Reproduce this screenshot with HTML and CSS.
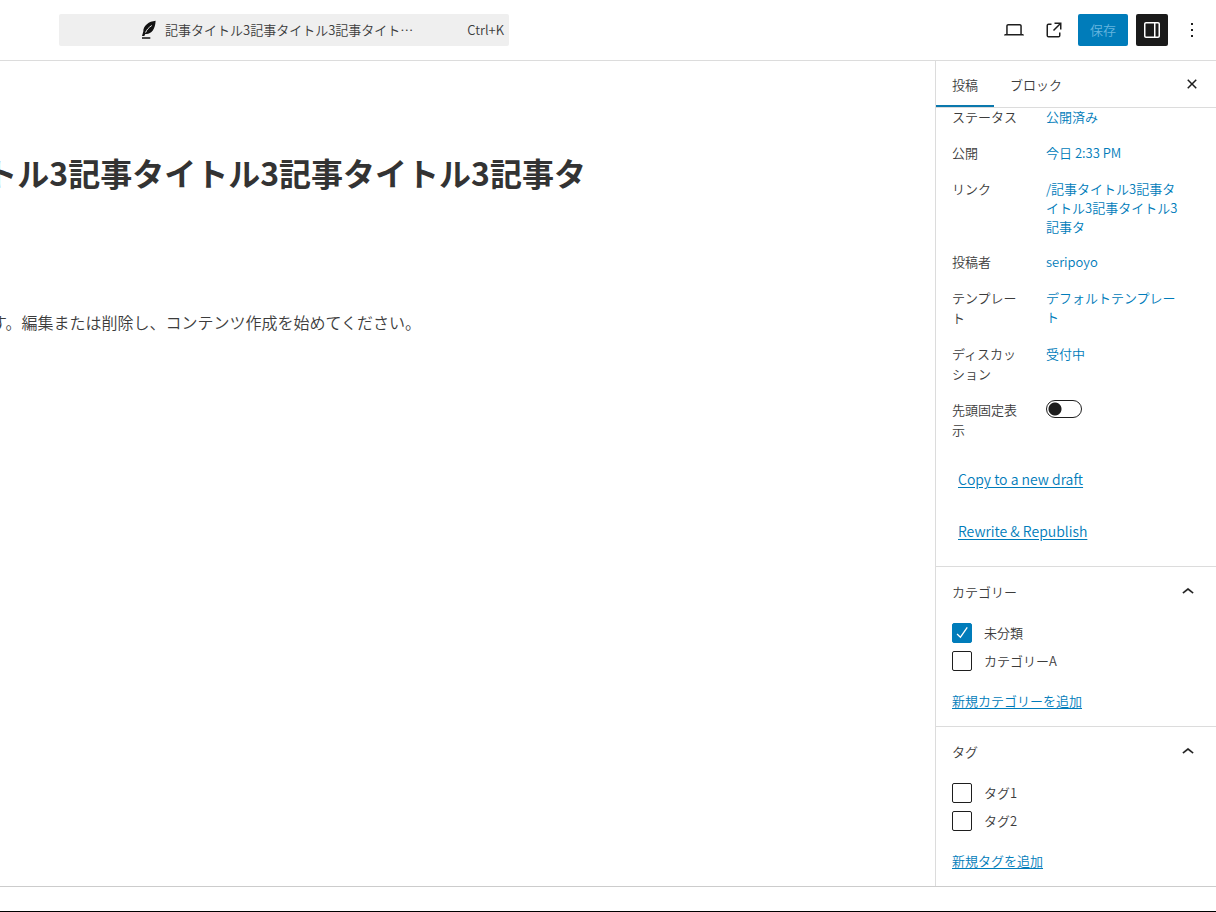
FILE: index.html
```html
<!DOCTYPE html>
<html lang="ja">
<head>
<meta charset="utf-8">
<meta name="viewport" content="width=device-width, initial-scale=1">
<title>投稿を編集</title>
<link rel="stylesheet" href="styles.css">
</head>
<body>
<header class="topbar">
  <button class="command" type="button">
    <span class="command-title">
      <svg class="feather" viewBox="0 0 16 20" aria-hidden="true"><path d="M14.600 .8C8 1.400 2 5.600 2.300 11.600L1 16H3.300L4.300 13.900C10 14.600 14.300 9.800 14.600 .8Z" fill="#111"/><path d="M4.600 12.600C5.600 9.800 7.600 7.600 10.800 5.500" fill="none" stroke="#efefef"/><path d="M1 18H9.300" stroke="#111" stroke-width="1.500"/></svg>
      <span>記事タイトル3記事タイトル3記事タイト…</span>
    </span>
    <kbd>Ctrl+K</kbd>
  </button>
  <div class="actions">
    <button class="icon-button" type="button" aria-label="表示"><svg viewBox="0 0 24 24"><path d="M20.5 16h-.7V8c0-1.100-.9-2-2-2H6.200c-1.100 0-2 .9-2 2v8h-.7c-.8 0-1.500.7-1.500 1.500h20c0-.8-.7-1.500-1.500-1.500zM5.700 8c0-.3.2-.5.5-.5h11.600c.3 0 .5.2.5.5v8H5.700V8z"/></svg></button>
    <button class="icon-button" type="button" aria-label="投稿を表示"><svg viewBox="0 0 24 24"><path d="M19.500 4.500h-7V6h4.440l-5.970 5.970 1.060 1.060L18 7.060v4.440h1.500v-7Zm-13 1a2 2 0 0 0-2 2v10a2 2 0 0 0 2 2h10a2 2 0 0 0 2-2v-3H17v3a.5.5 0 0 1-.5.5h-10a.5.5 0 0 1-.5-.5v-10a.5.5 0 0 1 .5-.5h3V5.500h-3Z"/></svg></button>
    <button class="save" type="button" disabled>保存</button>
    <button class="icon-button pressed" type="button" aria-label="設定" aria-pressed="true"><svg viewBox="0 0 24 24"><path d="M18 4H6c-1.100 0-2 .9-2 2v12c0 1.100.9 2 2 2h12c1.100 0 2-.9 2-2V6c0-1.100-.9-2-2-2zm-4 14.500H6c-.3 0-.5-.2-.5-.5V6c0-.3.2-.5.5-.5h8v13zm4.500-.5c0 .3-.2.5-.5.5h-2.500v-13H18c.3 0 .5.2.5.5v12z"/></svg></button>
    <button class="icon-button" type="button" aria-label="オプション"><svg viewBox="0 0 24 24"><path d="M13 19h-2v-2h2v2zm0-6h-2v-2h2v2zm0-6h-2V5h2v2z"/></svg></button>
  </div>
</header>

<div class="workspace">
  <main class="canvas">
    <h1>記事タイトル3記事タイトル3記事タイトル3記事タ</h1>
    <p>WordPress へようこそ。こちらは最初の投稿です。編集または削除し、コンテンツ作成を始めてください。</p>
  </main>

  <aside class="sidebar">
    <div class="tabs" role="tablist">
      <button class="tab active" type="button" role="tab" aria-selected="true">投稿</button>
      <button class="tab" type="button" role="tab" aria-selected="false">ブロック</button>
      <button class="icon-button close" type="button" aria-label="閉じる"><svg viewBox="0 0 24 24"><path d="M12 13.060l3.712 3.713 1.061-1.060L13.061 12l3.712-3.712-1.060-1.060L12 10.938 8.288 7.227l-1.061 1.060L10.939 12l-3.712 3.712 1.060 1.061L12 13.061z"/></svg></button>
    </div>
    <div class="panels">
      <section class="summary">
        <div class="row"><span class="label">ステータス</span><button type="button" class="value">公開済み</button></div>
        <div class="row"><span class="label">公開</span><button type="button" class="value">今日 2:33 PM</button></div>
        <div class="row"><span class="label">リンク</span><button type="button" class="value">/記事タイトル3記事タイトル3記事タイトル3記事タ</button></div>
        <div class="row"><span class="label">投稿者</span><button type="button" class="value">seripoyo</button></div>
        <div class="row"><span class="label">テンプレート</span><button type="button" class="value">デフォルトテンプレート</button></div>
        <div class="row"><span class="label">ディスカッション</span><button type="button" class="value">受付中</button></div>
        <div class="row"><label class="label" for="sticky">先頭固定表示</label><input class="switch" id="sticky" type="checkbox" role="switch"></div>
        <div class="draft-links">
          <a href="#">Copy to a new draft</a>
          <a href="#">Rewrite &amp; Republish</a>
        </div>
      </section>
      <section class="panel">
        <h2><button type="button" class="panel-toggle" aria-expanded="true"><span>カテゴリー</span><svg viewBox="0 0 24 24" aria-hidden="true"><path d="M6.500 12.400L12 8l5.500 4.400-.9 1.200L12 10l-4.500 3.600-1-1.200z"/></svg></button></h2>
        <div class="options">
          <div class="option"><input class="check" id="cat1" type="checkbox" checked><label for="cat1">未分類</label></div>
          <div class="option"><input class="check" id="cat2" type="checkbox"><label for="cat2">カテゴリーA</label></div>
        </div>
        <a class="add" href="#">新規カテゴリーを追加</a>
      </section>
      <section class="panel">
        <h2><button type="button" class="panel-toggle" aria-expanded="true"><span>タグ</span><svg viewBox="0 0 24 24" aria-hidden="true"><path d="M6.500 12.400L12 8l5.500 4.400-.9 1.200L12 10l-4.500 3.600-1-1.200z"/></svg></button></h2>
        <div class="options">
          <div class="option"><input class="check" id="tag1" type="checkbox"><label for="tag1">タグ1</label></div>
          <div class="option"><input class="check" id="tag2" type="checkbox"><label for="tag2">タグ2</label></div>
        </div>
        <a class="add" href="#">新規タグを追加</a>
      </section>
    </div>
  </aside>
</div>
<footer class="statusbar"></footer>
</body>
</html>
```
FILE: styles.css
```css
*, *::before, *::after { box-sizing: border-box; }

body {
  margin: 0;
  min-height: 100vh;
  display: flex;
  flex-direction: column;
  background: #fff;
  color: #3c3c3c;
  font: 350 13px/20px "Noto Sans CJK JP", "Noto Sans", sans-serif;
}

button {
  padding: 0;
  border: 0;
  background: none;
  color: inherit;
  font: inherit;
}

svg { width: 24px; height: 24px; fill: currentColor; flex: none; }

a { color: #007cba; text-underline-offset: 2px; }

.topbar {
  display: flex;
  align-items: center;
  justify-content: space-between;
  min-height: 61px;
  padding: 0 8px 0 59px;
  border-bottom: 1px solid #dcdcdc;
}

.command {
  display: flex;
  align-items: center;
  flex: 0 1 450px;
  min-width: 0;
  height: 32px;
  padding: 0 5px 0 28px;
  border-radius: 2px;
  background: #efefef;
}

.command-title {
  display: flex;
  align-items: center;
  justify-content: center;
  gap: 8px;
  flex: 1;
  white-space: nowrap;
}

.feather { width: 16px; height: 20px; }

.command kbd { font: inherit; }

.actions { display: flex; align-items: center; gap: 8px; }

.icon-button {
  display: flex;
  align-items: center;
  justify-content: center;
  width: 32px;
  height: 32px;
  border-radius: 2px;
  color: #1e1e1e;
}

.icon-button.pressed { background: #1a1a1a; color: #fff; }

.save {
  height: 32px;
  padding: 0 12px;
  border-radius: 2px;
  background: #007cba;
  color: #66b5df;
}

.workspace {
  flex: 1;
  display: grid;
  grid-template-columns: minmax(0, 1fr) 281px;
}

.canvas { overflow: hidden; }

.canvas h1, .canvas p {
  display: flex;
  justify-content: flex-end;
  margin: 0;
  white-space: nowrap;
}

.canvas h1 {
  padding: 87px 349px 0 0;
  color: #333;
  font-size: 32px;
  line-height: 48px;
}

.canvas p {
  padding: 112px 514px 0 0;
  font-size: 16px;
  line-height: 28px;
}

.sidebar {
  border-left: 1px solid #dcdcdc;
  display: flex;
  flex-direction: column;
}

.tabs {
  display: flex;
  align-items: stretch;
  height: 47px;
  border-bottom: 1px solid #dcdcdc;
}

.tab { padding: 2px 16px 0; }

.tab.active { box-shadow: inset 0 -2px #0a78ad; }

.close { margin: 7px 8px 0 auto; }

.panels { overflow: hidden; }

/* The summary is shown scrolled slightly under the tabs. */
.summary {
  display: grid;
  gap: 4px;
  margin-top: -7px;
  padding: 0 32px 25px 16px;
}

.row {
  display: grid;
  grid-template-columns: 70px minmax(0, 1fr);
  column-gap: 24px;
  align-items: start;
  min-height: 32px;
}

.label { padding: 6px 0; line-break: anywhere; }

.value {
  padding: 6px 0;
  color: #007cba;
  line-height: 19px;
  text-align: left;
  word-break: break-all;
  line-break: anywhere;
}

.switch {
  appearance: none;
  width: 36px;
  height: 18px;
  margin: 6px 0;
  border: 1px solid #1e1e1e;
  border-radius: 9px;
  background: radial-gradient(circle at 8px 8px, #1e1e1e 6px, transparent 7px);
}

.draft-links {
  display: grid;
  justify-items: start;
  gap: 32px;
  padding: 19px 6px 0;
  font-size: 14px;
}

.panel {
  border-top: 1px solid #dcdcdc;
  padding: 0 16px 15px;
}

.panel h2 { margin: 0; font: inherit; }

.panel-toggle {
  display: flex;
  align-items: center;
  justify-content: space-between;
  width: 100%;
  height: 50px;
}

.panel-toggle svg { color: #1e1e1e; stroke: currentColor; stroke-width: .2; }

.options { display: grid; gap: 8px; padding: 6px 0 20px; }

.option { display: flex; align-items: center; gap: 12px; }

.check {
  appearance: none;
  display: grid;
  width: 20px;
  height: 20px;
  margin: 0;
  border: 1px solid #1e1e1e;
  border-radius: 2px;
}

.check:checked { border-color: #007cba; background: #007cba; }

.check:checked::before {
  content: "";
  background: #fff;
  clip-path: path("M13.700 3 7.300 12.300 4.500 9.600 3.600 10.500 7.500 14.300 14.800 3.800Z");
}

.add { display: block; width: fit-content; }

.statusbar {
  height: 26px;
  border-top: 1px solid #ccc;
  border-bottom: 1px solid #000;
}
```
